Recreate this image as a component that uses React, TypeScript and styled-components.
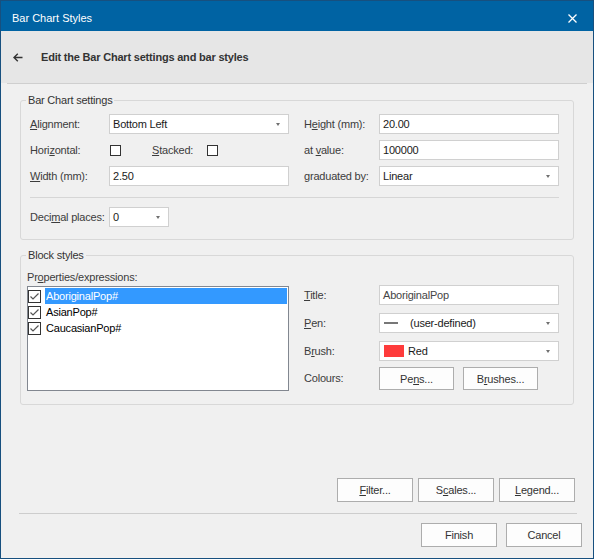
import React from "react";
import styled, { createGlobalStyle } from "styled-components";

const GlobalStyle = createGlobalStyle`
  html, body {
    margin: 0;
    padding: 0;
    background: #f0f0f0;
  }
  body {
    font-family: "Liberation Sans", Arial, sans-serif;
    font-size: 11px;
    letter-spacing: -0.2px;
    color: #333;
  }
  * {
    box-sizing: border-box;
  }
`;

const Window = styled.div`
  display: flex;
  flex-direction: column;
  width: 594px;
  height: 559px;
  border: 1px solid #17507f;
  background: #f0f0f0;
`;

const TitleBar = styled.div`
  display: flex;
  align-items: center;
  justify-content: space-between;
  height: 30px;
  padding: 4px 16px 0 11px;
  background: #0063a3;
  color: #fff;
  letter-spacing: 0;
`;

const Header = styled.div`
  display: flex;
  align-items: center;
  height: 52px;
  padding-left: 12px;
  background: #e6e6e6;
`;

const Heading = styled.div`
  margin-left: 18px;
  font-weight: bold;
  color: #333;
`;

const Divider = styled.div<{ $left?: number; $right?: number; $color?: string }>`
  height: 1px;
  margin: 0 ${(p) => p.$right ?? 6}px 0 ${(p) => p.$left ?? 6}px;
  background: ${(p) => p.$color ?? "#cfcfcf"};
`;

const Body = styled.div`
  display: flex;
  flex: 1;
  flex-direction: column;
`;

const Group = styled.fieldset<{ $padLeft: number; $top: number }>`
  margin: ${(p) => p.$top}px 19px 0 19px;
  padding: 6px 14px 12px ${(p) => p.$padLeft}px;
  border: 1px solid #d8d8d8;
  border-radius: 3px;
  min-width: 0;
`;

const GroupTitle = styled.legend<{ $shift: number }>`
  margin-left: ${(p) => p.$shift}px;
  padding: 0 2px;
  line-height: 16px;
  color: #333;
`;

const SettingsGrid = styled.div`
  display: grid;
  grid-template-columns: 79px 180px 90px 180px;
  grid-auto-rows: 20px;
  row-gap: 6px;
`;

const FieldLabel = styled.div<{ $indent?: number }>`
  padding-left: ${(p) => p.$indent ?? 0}px;
  line-height: 20px;
  color: #3c3c3c;
  white-space: nowrap;
`;

const Key = styled.span`
  text-decoration: underline;
  text-underline-offset: 1px;
`;

const TextBox = styled.div<{ $muted?: boolean }>`
  display: flex;
  align-items: center;
  height: 20px;
  padding-left: 3px;
  border: 1px solid #d0d0d0;
  background: #fff;
  color: ${(p) => (p.$muted ? "#454545" : "#1a1a1a")};
`;

const Select = styled(TextBox)<{ $width?: number }>`
  width: ${(p) => (p.$width ? `${p.$width}px` : "auto")};
`;

const Caret = styled.span`
  margin-left: auto;
  margin-right: 8px;
  border-left: 2.5px solid transparent;
  border-right: 2.5px solid transparent;
  border-top: 3px solid #707070;
`;

const CheckRow = styled.div`
  display: flex;
  align-items: center;
`;

const Box = styled.span`
  width: 11px;
  height: 11px;
  margin-left: 1px;
  border: 1px solid #333;
  background: #fff;
`;

const StackedLabel = styled.span`
  width: 54px;
  margin-left: 31px;
  color: #3c3c3c;
`;

const Rule = styled.div`
  height: 1px;
  margin: 11px 0 9px;
  background: #d6d6d6;
`;

const DecimalRow = styled.div`
  display: grid;
  grid-template-columns: 79px 60px;
  height: 20px;
`;

const BlockLayout = styled.div`
  display: flex;
`;

const ListColumn = styled.div`
  display: flex;
  flex-direction: column;
  width: 262px;
`;

const ListCaption = styled.div`
  line-height: 16px;
  margin-bottom: 1px;
  color: #3c3c3c;
`;

const ListBox = styled.div`
  height: 105px;
  padding: 1px 1px 0 0;
  border: 1px solid #828790;
  background: #fff;
`;

const ListItem = styled.div`
  display: flex;
  align-items: center;
  height: 16px;
`;

const ItemText = styled.span<{ $selected?: boolean }>`
  flex: 1;
  height: 16px;
  margin-left: 4px;
  padding-left: 1px;
  line-height: 16px;
  background: ${(p) => (p.$selected ? "#3399ff" : "transparent")};
  color: ${(p) => (p.$selected ? "#fff" : "#000")};
`;

const StyleGrid = styled.div`
  display: grid;
  grid-template-columns: 75px 180px;
  grid-template-rows: 20px 20px 20px 23px;
  row-gap: 8px;
  margin-left: 15px;
  padding-top: 16px;
`;

const PenLine = styled.span`
  width: 14px;
  height: 2px;
  margin-left: 1px;
  margin-right: 12px;
  background: #777;
`;

const Swatch = styled.span`
  width: 20px;
  height: 12px;
  margin-left: 1px;
  margin-right: 4px;
  background: #fe3b3b;
`;

const ButtonPair = styled.div`
  display: flex;
  gap: 9px;
  margin-top: -2px;
`;

const ColoursLabel = styled(FieldLabel)`
  margin-top: -2px;
  line-height: 23px;
`;

const Button = styled.div<{ $width?: number; $height?: number }>`
  display: flex;
  align-items: center;
  justify-content: center;
  width: ${(p) => p.$width ?? 75}px;
  height: ${(p) => p.$height ?? 23}px;
  border: 1px solid #adadad;
  background: #fdfdfd;
  color: #333;
`;

const Spacer = styled.div`
  flex: 1;
`;

const ButtonRow = styled.div<{ $gap: number; $right: number; $top?: number }>`
  display: flex;
  justify-content: flex-end;
  gap: ${(p) => p.$gap}px;
  margin-top: ${(p) => p.$top ?? 0}px;
  padding-right: ${(p) => p.$right}px;
`;

const Footer = styled.div`
  padding-bottom: 11px;
`;

const BackArrow = () => (
  <svg width="10" height="9" viewBox="0 0 10 9">
    <path d="M1 4.5H9.5M4.8 0.8L1 4.5L4.8 8.2" fill="none" stroke="#333" strokeWidth="1.4" />
  </svg>
);

const CloseIcon = () => (
  <svg width="9" height="9" viewBox="0 0 9 9">
    <path d="M0.5 0.5L8.5 8.5M8.5 0.5L0.5 8.5" stroke="#fff" strokeWidth="1.3" />
  </svg>
);

const ItemCheck = () => (
  <svg width="13" height="13" viewBox="0 0 13 13">
    <rect x="0.5" y="0.5" width="12" height="12" fill="#fff" stroke="#333" />
    <path d="M2.5 6.5L5 9L10.5 3.5" fill="none" stroke="#555" strokeWidth="1.2" />
  </svg>
);

const expressions = [
  { name: "AboriginalPop#", selected: true },
  { name: "AsianPop#", selected: false },
  { name: "CaucasianPop#", selected: false },
];

export default function App() {
  return (
    <>
      <GlobalStyle />
      <Window>
        <TitleBar>
          <span>Bar Chart Styles</span>
          <CloseIcon />
        </TitleBar>
        <Header>
          <BackArrow />
          <Heading>Edit the Bar Chart settings and bar styles</Heading>
        </Header>
        <Divider />
        <Body>
          <Group $padLeft={9} $top={8}>
            <GroupTitle $shift={-4}>Bar Chart settings</GroupTitle>
            <SettingsGrid>
              <FieldLabel>
                <Key>A</Key>lignment:
              </FieldLabel>
              <Select>
                Bottom Left
                <Caret />
              </Select>
              <FieldLabel $indent={15}>
                H<Key>e</Key>ight (mm):
              </FieldLabel>
              <TextBox>20.00</TextBox>

              <FieldLabel>
                Hori<Key>z</Key>ontal:
              </FieldLabel>
              <CheckRow>
                <Box />
                <StackedLabel>
                  <Key>S</Key>tacked:
                </StackedLabel>
                <Box />
              </CheckRow>
              <FieldLabel $indent={15}>
                at <Key>v</Key>alue:
              </FieldLabel>
              <TextBox>100000</TextBox>

              <FieldLabel>
                <Key>W</Key>idth (mm):
              </FieldLabel>
              <TextBox>2.50</TextBox>
              <FieldLabel $indent={15}>
                <Key>g</Key>raduated by:
              </FieldLabel>
              <Select>
                Linear
                <Caret />
              </Select>
            </SettingsGrid>
            <Rule />
            <DecimalRow>
              <FieldLabel>
                Deci<Key>m</Key>al places:
              </FieldLabel>
              <Select $width={60}>
                0
                <Caret />
              </Select>
            </DecimalRow>
          </Group>

          <Group $padLeft={6} $top={7}>
            <GroupTitle $shift={-1}>Block styles</GroupTitle>
            <BlockLayout>
              <ListColumn>
                <ListCaption>
                  Pr<Key>o</Key>perties/expressions:
                </ListCaption>
                <ListBox>
                  {expressions.map((item) => (
                    <ListItem key={item.name}>
                      <ItemCheck />
                      <ItemText $selected={item.selected}>{item.name}</ItemText>
                    </ListItem>
                  ))}
                </ListBox>
              </ListColumn>
              <StyleGrid>
                <FieldLabel>
                  <Key>T</Key>itle:
                </FieldLabel>
                <TextBox $muted>AboriginalPop</TextBox>
                <FieldLabel>
                  <Key>P</Key>en:
                </FieldLabel>
                <Select>
                  <PenLine />
                  (user-defined)
                  <Caret />
                </Select>
                <FieldLabel>
                  B<Key>r</Key>ush:
                </FieldLabel>
                <Select>
                  <Swatch />
                  Red
                  <Caret />
                </Select>
                <ColoursLabel>Colours:</ColoursLabel>
                <ButtonPair>
                  <Button>
                    Pe<Key>n</Key>s...
                  </Button>
                  <Button>
                    B<Key>r</Key>ushes...
                  </Button>
                </ButtonPair>
              </StyleGrid>
            </BlockLayout>
          </Group>

          <Spacer />

          <Footer>
            <ButtonRow $gap={5} $right={18}>
              <Button $width={76} $height={24}>
                <Key>F</Key>ilter...
              </Button>
              <Button $width={76} $height={24}>
                S<Key>c</Key>ales...
              </Button>
              <Button $width={76} $height={24}>
                <Key>L</Key>egend...
              </Button>
            </ButtonRow>
            <ButtonRow $gap={0} $right={0} $top={11}>
              <Spacer>
                <Divider $left={18} $right={16} $color="#cdcdcd" />
              </Spacer>
            </ButtonRow>
            <ButtonRow $gap={9} $right={11} $top={9}>
              <Button $width={76} $height={24}>
                Finish
              </Button>
              <Button $width={76} $height={24}>
                Cancel
              </Button>
            </ButtonRow>
          </Footer>
        </Body>
      </Window>
    </>
  );
}
